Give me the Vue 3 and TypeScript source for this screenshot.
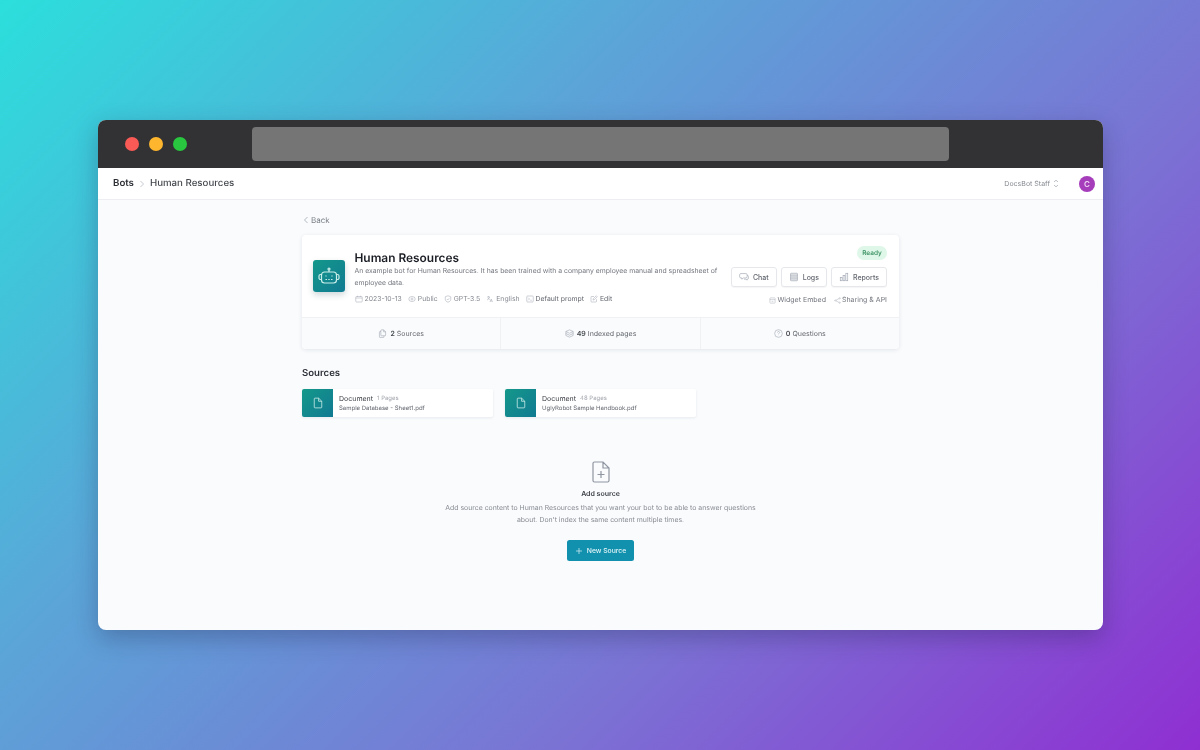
<template>
  <div class="page">
    <div class="window">
      <div class="titlebar">
        <div class="lights">
          <span class="light red"></span>
          <span class="light yellow"></span>
          <span class="light green"></span>
        </div>
        <div class="address"></div>
      </div>

      <header class="topbar">
        <nav class="crumbs">
          <span class="crumb-root">Bots</span>
          <svg class="crumb-sep" viewBox="0 0 8 8"><path d="M2.5 1l3 3-3 3" /></svg>
          <span class="crumb-page">Human Resources</span>
        </nav>
        <div class="account">
          <span class="team">DocsBot Staff</span>
          <svg class="updown" viewBox="0 0 8 12"><path d="M1.5 4L4 1.5 6.5 4M1.5 8L4 10.5 6.5 8" /></svg>
          <span class="avatar">C</span>
        </div>
      </header>

      <main class="content">
        <div class="column">
          <div class="back">
            <svg viewBox="0 0 8 8"><path d="M5.5 1l-3 3 3 3" /></svg>
            <span>Back</span>
          </div>

          <section class="card">
            <div class="card-top">
              <div class="bot-icon">
                <svg viewBox="0 0 24 24">
                  <path d="M12 6v2" />
                  <circle cx="12" cy="5" r="1" />
                  <rect x="4.5" y="8" width="15" height="11" rx="3" />
                  <path d="M4.500 10.500H3.500a1.500 1.500 0 0 0-1.500 1.500v2a1.500 1.500 0 0 0 1.500 1.500h1M19.500 10.500h1a1.500 1.500 0 0 1 1.500 1.500v2a1.500 1.500 0 0 1-1.500 1.500h-1" />
                  <path d="M9 11.500v1M15 11.500v1M8.500 15.500h1.500M11.300 15.500h1.400M14 15.500h1.500" />
                </svg>
              </div>
              <div class="bot-info">
                <h1>Human Resources</h1>
                <p>An example bot for Human Resources. It has been trained with a company employee manual and spreadsheet of employee data.</p>
                <ul class="meta">
                  <li v-for="m in meta" :key="m.label">
                    <svg viewBox="0 0 16 16" v-html="m.icon"></svg>
                    <span>{{ m.label }}</span>
                  </li>
                </ul>
              </div>
              <div class="bot-actions">
                <span class="ready">Ready</span>
                <div class="buttons">
                  <button v-for="b in buttons" :key="b.label" type="button">
                    <svg viewBox="0 0 16 16" v-html="b.icon"></svg>
                    {{ b.label }}
                  </button>
                </div>
                <div class="links">
                  <span v-for="l in links" :key="l.label">
                    <svg viewBox="0 0 16 16" v-html="l.icon"></svg>
                    {{ l.label }}
                  </span>
                </div>
              </div>
            </div>
            <div class="stats">
              <div v-for="s in stats" :key="s.label" class="stat">
                <svg viewBox="0 0 16 16" v-html="s.icon"></svg>
                <b>{{ s.value }}</b>
                <span>{{ s.label }}</span>
              </div>
            </div>
          </section>

          <h2>Sources</h2>
          <div class="sources">
            <div v-for="d in docs" :key="d.file" class="doc">
              <div class="doc-icon">
                <svg viewBox="0 0 16 16">
                  <path d="M3 2.500a1 1 0 0 1 1-1h4.800L13 5.700v7.800a1 1 0 0 1-1 1H4a1 1 0 0 1-1-1zM8.800 1.500v4.200H13" />
                </svg>
              </div>
              <div class="doc-text">
                <div class="doc-head"><span class="doc-type">Document</span><span class="doc-pages">{{ d.pages }} Pages</span></div>
                <div class="doc-file">{{ d.file }}</div>
              </div>
            </div>
          </div>

          <div class="empty">
            <svg class="empty-icon" viewBox="0 0 24 24">
              <path d="M4 3.500A1.500 1.500 0 0 1 5.500 2H14l6 6v12.500a1.500 1.500 0 0 1-1.500 1.500h-13A1.500 1.500 0 0 1 4 20.500zM14 2v6h6M12 11v7M8.500 14.500h7" />
            </svg>
            <h3>Add source</h3>
            <p>Add source content to Human Resources that you want your bot to be able to answer questions about. Don't index the same content multiple times.</p>
            <button type="button" class="primary">
              <svg viewBox="0 0 12 12"><path d="M6 1.500v9M1.500 6h9" /></svg>
              New Source
            </button>
          </div>
        </div>
      </main>
    </div>
  </div>
</template>

<script setup lang="ts">
interface IconItem {
  label: string
  icon: string
}

const meta: IconItem[] = [
  { label: '2023-10-13', icon: '<rect x="1.500" y="3" width="13" height="11" rx="1.500"/><path d="M1.500 6h13M5 1.500v2M11 1.500v2"/>' },
  { label: 'Public', icon: '<ellipse cx="8" cy="8" rx="6.500" ry="5"/><circle cx="8" cy="8" r="2"/>' },
  { label: 'GPT-3.5', icon: '<path d="M8 1.500l5.500 2v5c0 3-2.500 5-5.500 6-3-1-5.500-3-5.500-6v-5z"/><path d="M5.500 8l2 2 3-3.500"/>' },
  { label: 'English', icon: '<path d="M2 4h6M5 2v2M7 4c-.5 3-2.500 5-5 6M4 6c.5 1.500 2 3 3.500 3.500M8 14l2.500-6 2.500 6M9 12h3"/>' },
  { label: 'Default prompt', icon: '<rect x="1.500" y="2" width="13" height="12" rx="1.500"/><path d="M4.500 5.500l2.500 2.500-2.500 2.500M8.500 10.500h3"/>' },
  { label: 'Edit', icon: '<path d="M13 8.500V13a1 1 0 0 1-1 1H3a1 1 0 0 1-1-1V4a1 1 0 0 1 1-1h5M6 10l.5-2.500L12.500 1.500l2 2-6 6z"/>' },
]

const buttons: IconItem[] = [
  { label: 'Chat', icon: '<path d="M3 2.500h8a2 2 0 0 1 2 2v3a2 2 0 0 1-2 2H7l-2.500 2v-2H3a2 2 0 0 1-2-2v-3a2 2 0 0 1 2-2z"/><path d="M13 5.500h.5A1.500 1.500 0 0 1 15 7v3a1.500 1.500 0 0 1-1.500 1.500H13V13l-2-1.500H8"/>' },
  { label: 'Logs', icon: '<rect x="2.500" y="2" width="11" height="12" rx="1" fill="#eceef0"/><path d="M2.500 5h11M2.500 8h11M2.500 11h11"/>' },
  { label: 'Reports', icon: '<rect x="2" y="9" width="3" height="5"/><rect x="6.500" y="5.500" width="3" height="8.500"/><rect x="11" y="2" width="3" height="12"/>' },
]

const links: IconItem[] = [
  { label: 'Widget Embed', icon: '<rect x="2" y="2" width="12" height="12" rx="1.500"/><path d="M2 6h12M6 10h4"/>' },
  { label: 'Sharing & API', icon: '<circle cx="3" cy="8" r="1.500"/><circle cx="13" cy="3" r="1.500"/><circle cx="13" cy="13" r="1.500"/><path d="M4.500 7.200l7-3.500M4.500 8.800l7 3.500"/>' },
]

const stats = [
  { value: '2', label: 'Sources', icon: '<path d="M6 1.500h4l3.500 3.500v6a1 1 0 0 1-1 1H6a1 1 0 0 1-1-1v-8.500a1 1 0 0 1 1-1zM10 1.500V5h3.500M5 4.500H3.500a1 1 0 0 0-1 1V14a1 1 0 0 0 1 1H9.500a1 1 0 0 0 1-1v-2"/>' },
  { value: '49', label: 'Indexed pages', icon: '<path d="M8 1.500l6.500 3L8 7.500l-6.500-3zM1.500 8L8 11l6.500-3M1.500 4.500v7L8 14.500l6.500-3v-7"/>' },
  { value: '0', label: 'Questions', icon: '<circle cx="8" cy="8" r="6.800"/><path d="M6.200 6.200a1.900 1.900 0 1 1 2.800 1.700c-.6.300-1 .7-1 1.400M8 11.300v.2"/>' },
]

const docs = [
  { pages: 1, file: 'Sample Database - Sheet1.pdf' },
  { pages: 48, file: 'UglyRobot Sample Handbook.pdf' },
]
</script>

<style>
body {
  margin: 0;
}
</style>

<style scoped>
.page {
  width: 1200px;
  height: 750px;
  display: flex;
  align-items: center;
  justify-content: center;
  overflow: hidden;
  background: linear-gradient(135deg, #2bdfdc 0%, #5aa6d8 33%, #7a74d4 66%, #8f2fd2 100%);
  font-family: Inter, "Liberation Sans", sans-serif;
  text-rendering: geometricPrecision;
}

.window {
  width: 1005px;
  height: 510px;
  display: flex;
  flex-direction: column;
  border-radius: 8px;
  overflow: hidden;
  background: #f9fbfd;
  box-shadow: 0 8px 24px rgba(30, 30, 70, 0.3);
  will-change: transform;
}

.titlebar {
  height: 48px;
  flex: none;
  display: flex;
  align-items: center;
  background: #323234;
}

.lights {
  display: flex;
  gap: 10px;
  margin-left: 27px;
}

.light {
  width: 14px;
  height: 14px;
  border-radius: 50%;
}
.red { background: #fa5a55; }
.yellow { background: #fdb62e; }
.green { background: #29c73f; }

.address {
  width: 697px;
  height: 34px;
  margin-left: 65px;
  border-radius: 4px;
  background: #757575;
}

.topbar {
  height: 31px;
  flex: none;
  display: flex;
  align-items: center;
  justify-content: space-between;
  padding: 0 8px 0 15px;
  background: #fff;
  border-bottom: 1px solid #eceef1;
}

.crumbs {
  display: flex;
  align-items: center;
  font-size: 9.7px;
  color: #45494f;
  font-weight: 500;
}

.crumb-root {
  color: #2d3036;
  font-weight: 600;
}

.crumb-sep {
  width: 8px;
  height: 8px;
  margin: 0 4px 0 4px;
  fill: none;
  stroke: #c4c8cf;
}

.account {
  display: flex;
  align-items: center;
  font-size: 7px;
  color: #858991;
}

.updown {
  width: 6px;
  height: 9px;
  margin: 0 20px 0 3px;
  fill: none;
  stroke: #9ca3af;
}

.avatar {
  width: 16px;
  height: 16px;
  border-radius: 50%;
  background: #a63dbb;
  color: #f3e3f7;
  font-size: 8px;
  font-weight: 500;
  display: flex;
  align-items: center;
  justify-content: center;
}

.content {
  flex: 1;
  display: flex;
  justify-content: center;
}

.column {
  width: 597px;
}

.back {
  display: flex;
  align-items: center;
  gap: 1px;
  height: 12px;
  margin-top: 14px;
  font-size: 8px;
  color: #7d8087;
}

.back svg {
  width: 8px;
  height: 8px;
  fill: none;
  stroke: #b4b9c1;
}

.card {
  margin-top: 9px;
  height: 114px;
  display: flex;
  flex-direction: column;
  background: #fff;
  border-radius: 4px;
  box-shadow: 0 1px 4px rgba(30, 40, 60, 0.1);
}

.card-top {
  height: 82px;
  flex: none;
  display: flex;
  align-items: flex-start;
  padding: 0 12px 0 11px;
  box-sizing: border-box;
}

.bot-icon {
  width: 32px;
  height: 32px;
  flex: none;
  margin-top: 25px;
  margin-right: 9.5px;
  border-radius: 3px;
  display: flex;
  align-items: center;
  justify-content: center;
  background: linear-gradient(135deg, #13988a, #117a92);
  box-shadow: 0 3px 6px rgba(20, 60, 70, 0.2);
}

.bot-icon svg {
  width: 24px;
  height: 24px;
  fill: none;
  stroke: #c9eeea;
  stroke-width: 1.2;
}

.bot-info {
  width: 368px;
  flex: none;
}

.bot-info h1 {
  margin: 16px 0 0;
  font-size: 11.9px;
  line-height: 14px;
  font-weight: 600;
  color: #1a1d24;
}

.bot-info p {
  margin: 0;
  font-size: 6.85px;
  line-height: 12px;
  color: #72767e;
}

.meta {
  list-style: none;
  display: flex;
  gap: 6px;
  margin: 4px 0 0;
  padding: 0;
  font-size: 6.85px;
  color: #858991;
  line-height: 12px;
}

.meta li {
  display: flex;
  align-items: center;
  gap: 2px;
}

.meta li:nth-child(n + 5) {
  color: #62666e;
}

svg {
  fill: none;
  stroke: #9ca3af;
  stroke-width: 1;
}

.meta svg {
  width: 8px;
  height: 8px;
}

.bot-actions {
  flex: 1;
  display: flex;
  flex-direction: column;
  align-items: flex-end;
}

.ready {
  margin-top: 11px;
  height: 14px;
  width: 30px;
  text-align: center;
  border-radius: 7px;
  background: #def7e8;
  color: #2f8a58;
  font-size: 6.5px;
  font-weight: 500;
  line-height: 14px;
}

.buttons {
  display: flex;
  gap: 4px;
  margin-top: 7px;
}

.buttons button {
  height: 20px;
  padding: 0 7px;
  display: flex;
  align-items: center;
  gap: 4px;
  background: #fff;
  border: 1px solid #e5e7eb;
  border-radius: 3px;
  box-shadow: 0 1px 1px rgba(0, 0, 0, 0.04);
  font: 500 7px Inter, "Liberation Sans", sans-serif;
  color: #62666e;
}

.buttons svg {
  width: 10px;
  height: 10px;
}

.links {
  display: flex;
  gap: 8px;
  margin-top: 7px;
  font-size: 7px;
  line-height: 12px;
  color: #72767e;
}

.links span {
  display: flex;
  align-items: center;
  gap: 1px;
}

.links svg {
  width: 7px;
  height: 7px;
}

.stats {
  flex: 1;
  display: flex;
  background: #fafbfc;
  border-top: 1px solid #eff1f3;
  border-radius: 0 0 4px 4px;
}

.stat {
  flex: 1;
  display: flex;
  align-items: center;
  justify-content: center;
  gap: 2px;
  font-size: 7px;
  color: #62666e;
}

.stat + .stat {
  border-left: 1px solid #f0f1f3;
}

.stat b {
  font-weight: 600;
  color: #45494f;
}

.stat svg {
  width: 9px;
  height: 9px;
  margin-right: 1px;
}

h2 {
  margin: 18px 0 0;
  font-size: 9.6px;
  line-height: 14px;
  font-weight: 600;
  color: #2d3038;
}

.sources {
  display: flex;
  gap: 12px;
  margin-top: 8px;
}

.doc {
  width: 191px;
  height: 28px;
  display: flex;
  background: #fff;
  border-radius: 2px;
  box-shadow: 0 1px 3px rgba(30, 40, 60, 0.08);
}

.doc-icon {
  width: 31px;
  flex: none;
  display: flex;
  align-items: center;
  justify-content: center;
  border-radius: 2px 0 0 2px;
  background: linear-gradient(135deg, #14988a, #117a92);
}

.doc-icon svg {
  width: 12px;
  height: 12px;
  stroke: #d6f2ee;
}

.doc-text {
  padding: 4px 0 0 6px;
}

.doc-head {
  display: flex;
  align-items: center;
  gap: 4px;
  height: 11px;
}

.doc-type {
  font-size: 7px;
  color: #3b3e45;
  font-weight: 400;
}

.doc-pages {
  font-size: 6px;
  color: #a5a8af;
}

.doc-file {
  margin-top: 0;
  font-size: 6px;
  line-height: 9px;
  color: #62666e;
}

.empty {
  display: flex;
  flex-direction: column;
  align-items: center;
  margin-top: 43px;
  text-align: center;
}

.empty-icon {
  width: 24px;
  height: 24px;
  stroke: #8f96a1;
  stroke-width: 1.2;
}

h3 {
  margin: 4px 0 0;
  font-size: 7px;
  line-height: 12px;
  font-weight: 600;
  color: #3b3e45;
}

.empty p {
  width: 330px;
  margin: 2px 0 0;
  font-size: 6.9px;
  line-height: 12px;
  color: #888b92;
}

.primary {
  height: 21px;
  margin-top: 14px;
  padding: 0 8px;
  display: flex;
  align-items: center;
  gap: 4px;
  border: none;
  border-radius: 2.5px;
  background: #1191ae;
  font: 500 6.8px Inter, "Liberation Sans", sans-serif;
  color: #e3f5f9;
}

.primary svg {
  width: 8px;
  height: 8px;
  stroke: #e3f5f9;
}
</style>
